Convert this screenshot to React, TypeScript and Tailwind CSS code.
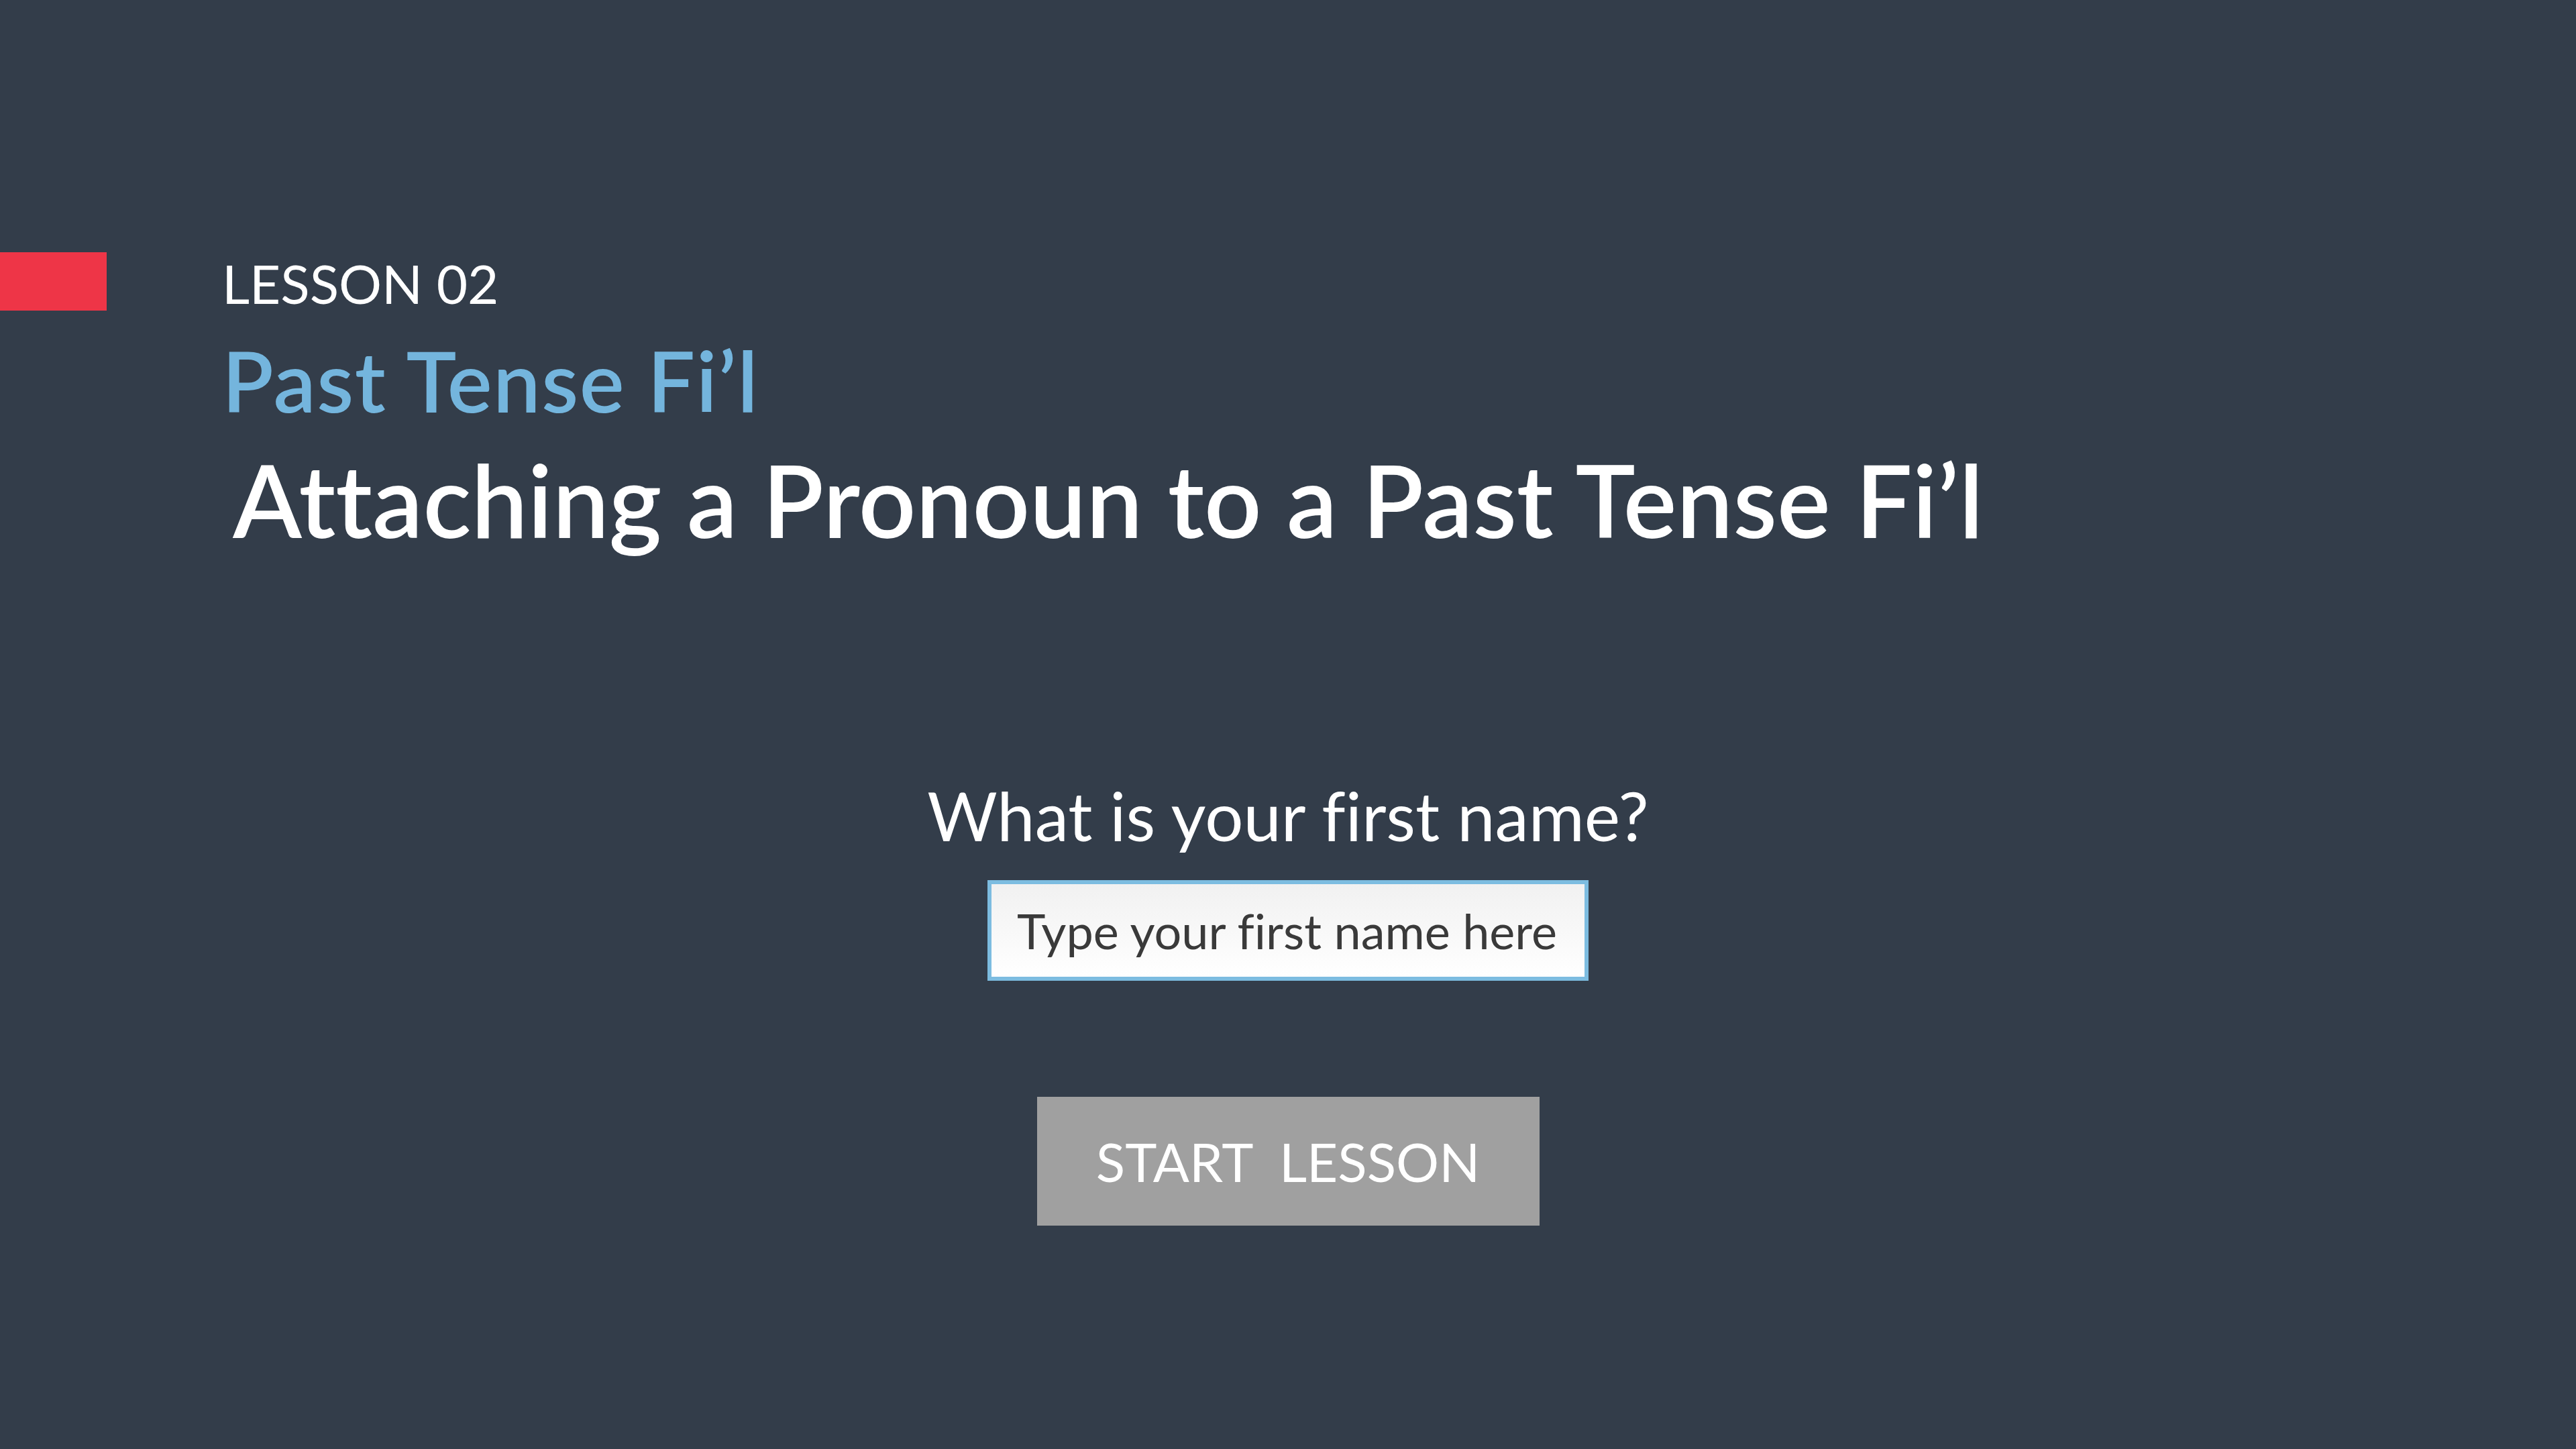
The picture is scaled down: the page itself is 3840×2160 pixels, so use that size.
import { useState } from "react";

export default function App() {
  const [name, setName] = useState("");

  return (
    <div className="min-h-screen w-full bg-[#333d4a] font-['Lato',sans-serif] text-white [font-variant-ligatures:none]">
      <header className="flex items-start pt-[376px]">
        <div className="h-[87px] w-[159px] shrink-0 bg-[#ee3547]" />
        <div className="ml-[172px] flex flex-col pt-[6px]">
          <div className="text-[80px] leading-none">LESSON 02</div>
          <h2 className="mt-[42px] text-[126px] font-semibold leading-none tracking-[1.5px] text-[#74b5dd]">
            Past Tense Fi’l
          </h2>
          <h1 className="ml-[16px] mt-[39px] text-[150px] font-semibold leading-none">
            Attaching a Pronoun to a Past Tense Fi’l
          </h1>
        </div>
      </header>

      <main className="mt-[346px] flex flex-col items-center">
        <label htmlFor="first-name" className="text-[101px] leading-none">
          What is your first name?
        </label>
        <input
          id="first-name"
          value={name}
          onChange={(e) => setName(e.target.value)}
          placeholder="Type your first name here"
          className="mt-[46px] h-[150px] w-[896px] border-[6px] border-[#7cbce0] bg-gradient-to-b from-[#f1f1f1] to-white px-[38px] text-[72px] text-[#333] outline-none placeholder:text-[#3a3a3a]"
        />
        <button
          type="button"
          className="mt-[173px] h-[192px] w-[749px] bg-[#a0a0a0] text-[80px] leading-none whitespace-pre text-white"
        >
          {"START  LESSON"}
        </button>
      </main>
    </div>
  );
}
